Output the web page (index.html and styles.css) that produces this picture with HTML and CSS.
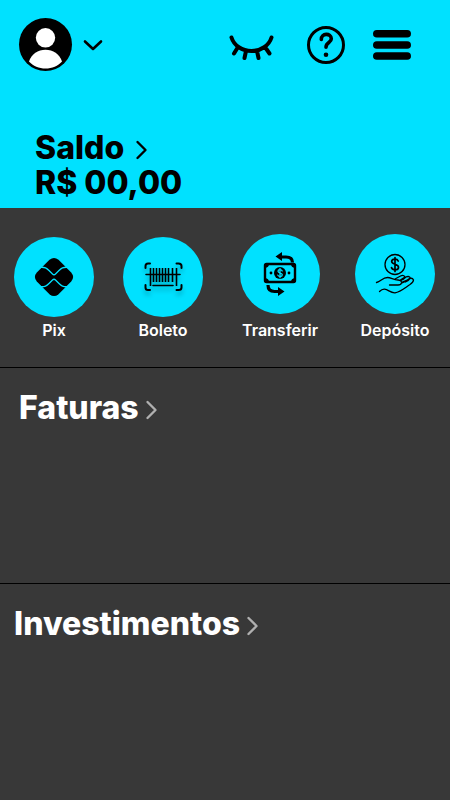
FILE: index.html
```html
<!DOCTYPE html>
<html lang="pt-BR">
<head>
<meta charset="utf-8">
<meta name="viewport" content="width=device-width, initial-scale=1">
<title>Conta</title>
<link rel="stylesheet" href="styles.css">
</head>
<body>
<header class="header">
  <div class="topbar">
    <button class="icon-button profile" type="button" aria-label="Perfil">
      <svg width="53" height="53" viewBox="0 0 53 53">
        <circle cx="26.500" cy="26.500" r="26.500"/>
        <circle cx="26.500" cy="19.800" r="9.700" fill="#fff"/>
        <path d="M10 43.500C12.500 36 19 31.800 26.500 31.800S40.500 36 43 43.500C39 48 33 50.500 26.500 50.500S14 48 10 43.500Z" fill="#fff"/>
      </svg>
      <svg class="stroke" width="20" height="12" viewBox="0 0 20 12" stroke-width="2.600"><path d="M2 2.500 10 10 18 2.500"/></svg>
    </button>
    <nav class="actions" aria-label="Ações">
      <button class="icon-button" type="button" aria-label="Mostrar saldo">
        <svg class="stroke" width="50" height="38" viewBox="0 0 50 38" stroke-width="4">
          <path d="M2.500 11.500C5 19.500 13 25 22.500 25S40 19.500 42.500 11.500M9 21 5 27.500M17 25 15.500 32M28 25 29.500 32M36 21 40.500 27.500"/>
        </svg>
      </button>
      <button class="icon-button" type="button" aria-label="Ajuda">
        <svg class="stroke" width="38" height="38" viewBox="0 0 38 38" stroke-width="3">
          <circle cx="19" cy="19" r="17.500"/>
          <path stroke-width="3.600" d="M14.300 13.500C14 6.800 24.200 6.700 24.300 12.800C24.300 16.800 19 16.300 19 21.200"/>
          <circle cx="19" cy="28.700" r="2.300" fill="#000" stroke="none"/>
        </svg>
      </button>
      <button class="icon-button" type="button" aria-label="Menu">
        <svg width="38" height="38" viewBox="0 0 38 38">
          <rect y="4" width="38" height="7.600" rx="3.800"/><rect y="15.200" width="38" height="7.600" rx="3.800"/><rect y="26.200" width="38" height="7.600" rx="3.800"/>
        </svg>
      </button>
    </nav>
  </div>
  <div class="balance">
    <a class="heading-link heading-link--wide" href="#saldo">Saldo
      <svg class="stroke" width="14" height="20" viewBox="0 0 14 20" stroke-width="2.400"><path d="M2.500 4 10.500 12 2.500 20"/></svg>
    </a>
    <p class="amount" id="saldo">R$ 00,00</p>
  </div>
</header>

<main class="main">
  <nav class="shortcuts" aria-label="Atalhos">
    <a class="shortcut shortcut--close" href="#pix">
      <span class="disc">
        <svg width="80" height="80" viewBox="0 0 80 80">
          <path d="M35.500 22.800Q40 19 44.500 22.800L57.200 35.500Q61 40 57.200 44.500L44.500 57.200Q40 61 35.500 57.200L22.800 44.500Q19 40 22.800 35.500Z"/>
          <path class="stroke stroke--cyan" stroke-width="1.300" d="M25 30.500C31 29.500 33 31.500 35 33.500L38.500 37Q40 38.500 41.500 37L45 33.500C47 31.500 49 29.500 55 30.500M25 49.500C31 50.500 33 48.500 35 46.500L38.500 43Q40 41.500 41.500 43L45 46.500C47 48.500 49 50.500 55 49.500"/>
        </svg>
      </span>
      <span class="label">Pix</span>
    </a>
    <a class="shortcut shortcut--close" href="#boleto">
      <span class="disc">
        <svg class="stroke scan" width="80" height="80" viewBox="0 0 80 80" stroke-width="2">
          <path d="M22.500 31V29Q22.500 26.500 25 26.500H27M53.500 26.500H55.500Q58.500 26.500 58.500 29V31M22.500 48V50.500Q22.500 53 25 53H27M53.500 53H55.500Q58.500 53 58.500 50.500V48"/>
          <path stroke-width="1.600" d="M23 37.500H57M30 48.500H50"/>
          <path stroke-linecap="butt" stroke-width="1.600" d="M27.500 31V49M30.500 31V45M33.500 31V45M36.500 31V45M39.500 31V45M42.500 31V45M45.500 31V45M49.500 31V45M53.500 31V49"/>
        </svg>
      </span>
      <span class="label">Boleto</span>
    </a>
    <a class="shortcut" href="#transferir">
      <span class="disc">
        <svg width="80" height="80" viewBox="0 0 80 80">
          <g class="stroke">
            <rect x="25" y="30" width="30" height="18" rx="1.500" stroke-width="2.400"/>
            <path stroke-width="3.200" stroke-linecap="butt" d="M41 23H46Q52.500 23 52.500 28.500M28 51Q28 57.500 34.500 57.500H39"/>
          </g>
          <path d="M35.500 22.500 42 18V27ZM44.500 57.500 38 53V62ZM25 30H29Q29 33.500 25 34ZM55 30H51Q51 33.500 55 34ZM25 48H29Q29 44.500 25 44ZM55 48H51Q51 44.500 55 44Z"/>
          <circle cx="40" cy="39" r="6"/><circle cx="31" cy="39" r="1.400"/><circle cx="49" cy="39" r="1.400"/>
          <path class="stroke stroke--cyan" stroke-width="1.300" d="M42.200 37C41.500 35.200 38 35.300 38 37.300C38 39.500 42.300 38.500 42.300 40.800C42.300 43 38.500 43 37.800 41.100M40 34.500V43.700"/>
        </svg>
      </span>
      <span class="label">Transferir</span>
    </a>
    <a class="shortcut" href="#deposito">
      <span class="disc">
        <svg class="stroke" width="80" height="80" viewBox="0 0 80 80" stroke-width="1.300">
          <circle cx="40" cy="30.500" r="10"/>
          <path stroke-width="1.700" d="M43.200 27C42 24.200 36.700 24.600 36.700 27.600C36.700 31 43.500 29.500 43.500 33.200C43.500 36.500 37.700 36.600 36.500 33.600M40 23.500V37.500"/>
          <path d="M21.500 48.500C26 47.500 27.500 43.500 32.500 43.500C36 43.500 38 45.500 43 46Q47 46.500 46.500 49Q46 51 43 51L34.500 51M46.500 49C49 48.500 51.500 47 54.500 44.500Q57.500 43.500 58.500 46Q58.500 48 55 50.500C49 54.500 45 58 40 58.800C35 59 33.500 55.500 29.500 55.200Q27 55 24.500 57.500M40 45 45.500 42Q48.500 40.500 50 43L45 46.200M46 46.500 51 43Q54.500 41.500 55.500 44.500M47.500 48.200 54.500 45M51 43 48 45.500M55 44.500Q54 46.500 50.500 48"/>
        </svg>
      </span>
      <span class="label">Depósito</span>
    </a>
  </nav>

  <section class="panel panel--invoices">
    <h2 class="panel-title"><a class="heading-link" href="#faturas">Faturas
      <svg class="stroke" width="14" height="20" viewBox="0 0 14 20" stroke-width="2.400"><path d="M2.500 4 10.500 12 2.500 20"/></svg>
    </a></h2>
  </section>
  <section class="panel panel--investments">
    <h2 class="panel-title"><a class="heading-link" href="#investimentos">Investimentos
      <svg class="stroke" width="14" height="20" viewBox="0 0 14 20" stroke-width="2.400"><path d="M2.500 4 10.500 12 2.500 20"/></svg>
    </a></h2>
  </section>
</main>
</body>
</html>
```
FILE: styles.css
```css
* {
  box-sizing: border-box;
}

body {
  display: flex;
  flex-direction: column;
  min-height: 100vh;
  margin: 0;
  background: #383838;
  color: #fff;
  font-family: Inter, "Liberation Sans", sans-serif;
}

svg {
  display: block;
  flex: none;
  overflow: visible;
}

.stroke {
  fill: none;
  stroke: currentColor;
  stroke-linecap: round;
  stroke-linejoin: round;
}

.stroke--cyan {
  stroke: #00e1ff;
}

.header {
  padding: 18px 39px 8px 19px;
  background: #00e1ff;
  color: #000;
}

.topbar,
.actions,
.icon-button {
  display: flex;
  align-items: center;
}

.topbar {
  justify-content: space-between;
}

.actions {
  gap: 28px;
}

.icon-button {
  padding: 0;
  border: 0;
  background: none;
  color: #000;
  cursor: pointer;
}

.profile {
  gap: 11px;
}

.balance {
  margin-top: 59px;
  padding-left: 16px;
  font-size: 32px;
  font-weight: 800;
  line-height: 35px;
}

.heading-link {
  display: inline-flex;
  align-items: center;
  gap: 6px;
  color: inherit;
  text-decoration: none;
}

.heading-link--wide {
  gap: 11px;
}

.amount {
  margin: 0;
}

.main {
  display: flex;
  flex: 1;
  flex-direction: column;
}

.shortcuts {
  display: grid;
  grid-template-columns: 109fr 117fr 115fr 80fr;
  align-items: end;
  padding: 26px 15px 27px 14px;
  border-bottom: 1px solid #000;
}

.shortcut {
  display: flex;
  flex-direction: column;
  align-items: center;
  gap: 6px;
  width: 80px;
  color: #fff;
  font-size: 16px;
  font-weight: 600;
  line-height: 20px;
  text-decoration: none;
}

.shortcut--close {
  gap: 3px;
}

.disc {
  border-radius: 50%;
  background: #00e1ff;
  color: #000;
}

.scan {
  filter: drop-shadow(0 4px 2px rgba(0, 0, 0, 0.25));
}

.panel {
  flex: 1 0 100px;
  padding: 20px 19px;
}

.panel--invoices {
  border-bottom: 1px solid #000;
}

.panel--investments {
  padding-left: 14px;
}

.panel-title {
  margin: 0;
  font-size: 32px;
  font-weight: 800;
  line-height: 40px;
}

.panel-title svg {
  color: #b0b0b0;
}
```
